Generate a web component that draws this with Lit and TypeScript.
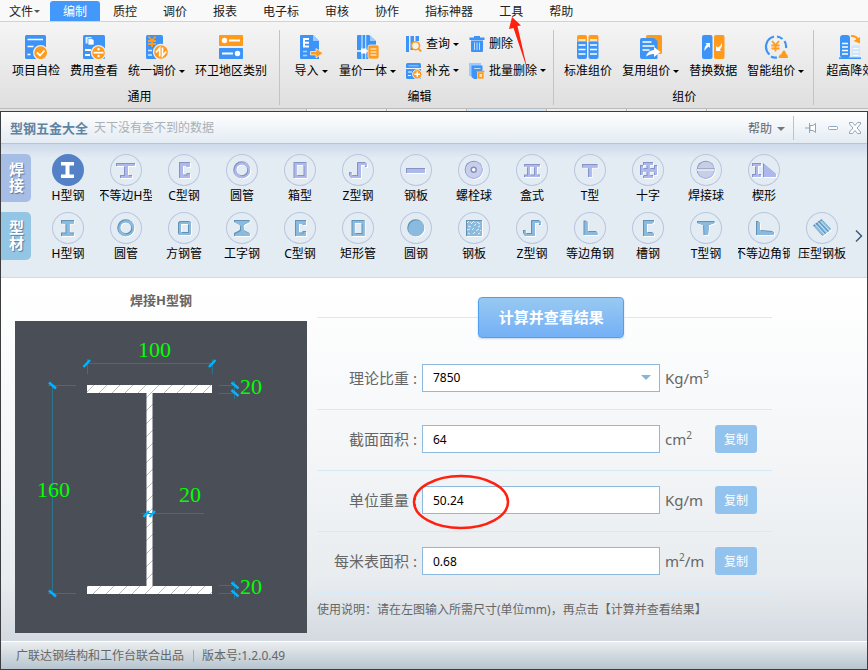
import { LitElement, html, svg, css, nothing } from "lit";
import { customElement, property } from "lit/decorators.js";
import { classMap } from "lit/directives/class-map.js";

const BLUE = "#3d94f6";
const ORANGE = "#ff9a1a";

const yen = (x: number, y: number) => svg`
  <path d="M${x + 0.5} ${y}l3.500 4 3.500-4M${x + 4} ${y + 4}v6.500M${x} ${y + 4.5}h8M${x} ${y + 7.5}h8" stroke=${ORANGE} stroke-width="1.800" fill="none"/>`;

/* Toolbar pictures, drawn on a 24 or a 16 unit grid */
const toolIcons: Record<string, unknown> = {
  check: svg`
    <rect x="1" width="21" height="24" rx="1.500" fill=${BLUE}/>
    <path d="M3.500 4.500h15.500M3.500 11.500h6M3.500 19.500h3" stroke="#fff" stroke-width="1.600"/>
    <circle cx="16.700" cy="17.700" r="7" fill=${ORANGE} stroke="#eee" stroke-width="1.300"/>
    <path d="M13 17.500l3 3 4.500-5" stroke="#fff" stroke-width="1.800" fill="none"/>`,
  fee: svg`
    <rect x="1" width="22" height="24" rx="1.500" fill=${BLUE}/>
    <path d="M3.500 2h6v6.500h-6z" fill="#d9ebff"/><path d="M6 3.500h4l2 2V10H6z" fill="#fff" stroke=${BLUE} stroke-width=".7"/>
    <path d="M3 15h6M3 20h5" stroke="#fff" stroke-width="1.800"/>
    <circle cx="16.500" cy="17.700" r="7" fill=${ORANGE} stroke="#eee" stroke-width="1.300"/>
    <path d="M11.500 17.700h10" stroke="#fff" stroke-width="1.700"/><circle cx="16.500" cy="14.300" r="1.200" fill="#fff"/><circle cx="16.500" cy="21" r="1.200" fill="#fff"/>`,
  adjust: svg`
    <rect x="1" width="17" height="24" rx="1.500" fill=${BLUE}/>
    ${yen(3, 1.5)}
    <path d="M3 15.500h4M3 20h4" stroke="#cfe5ff" stroke-width="1.400"/>
    <circle cx="16" cy="17" r="7.500" fill=${ORANGE} stroke="#eee" stroke-width="1.300"/>
    <path d="M14.700 21.500V13l-3.700 4.500M17.500 12.500V21l3.700-4.500" stroke="#fff" stroke-width="1.700" fill="none"/>`,
  region: svg`
    <rect width="24" height="11" rx=".8" fill=${ORANGE}/><rect y="13" width="24" height="11" rx=".8" fill=${BLUE}/>
    <circle cx="5.500" cy="5.500" r="2.700" fill="#fff"/><circle cx="18.500" cy="18.500" r="2.700" fill="#fff"/>
    <path d="M10 5.500h11M3 18.500h11" stroke="#fff" stroke-width="1.800"/>`,
  import: svg`
    <path d="M2 0h12l6 6v18H2Q1 24 1 23V1Q1 0 2 0z" fill=${BLUE}/><path d="M14 0l6 6h-6z" fill="#9ccbff"/>
    <path d="M10 4H5v7.500h5M5 7.700h5" stroke="#fff" stroke-width="1.900" fill="none"/>
    <path d="M4 16.500h4M4 20.500h4" stroke="#a9d2ff" stroke-width="1.500"/>
    <path d="M11.500 16.500h5.500V13.500l7 4.700-7 4.700v-3h-5.500z" fill=${ORANGE} stroke="#eee" stroke-width=".8"/>`,
  takeoff: svg`
    <path d="M2 0h11l7 6v18H2Q1 24 1 23V1Q1 0 2 0z" fill=${BLUE}/><path d="M14 0l6 6h-6z" fill="#9ccbff"/>
    <path d="M6 0v24M9.700 0v24" stroke="#d5e8ff" stroke-width="1.100"/><path d="M1 16h12" stroke="#fff" stroke-width="1.500"/><rect x="5" y="13.500" width="5.500" height="5" fill="#fff"/>
    <rect x="12" y="10" width="11" height="14" rx="2" fill=${ORANGE} stroke="#eee" stroke-width=".8"/>
    <path d="M14.500 14h6M14.500 17h6M14.500 20h6" stroke="#fff" stroke-width="1.100"/>`,
  query: svg`
    <rect width="3" height="16" fill=${BLUE}/><path d="M4.500 0H8v5l-2 4 2 5H4.500z" fill=${BLUE}/><rect x="9.500" width="3.500" height="5" fill=${BLUE}/>
    <circle cx="9.500" cy="9.700" r="4" fill="#f2f2f2" stroke=${ORANGE} stroke-width="1.600"/><path d="M12.200 12.500l3 3" stroke=${ORANGE} stroke-width="2"/>`,
  fill: svg`
    <rect width="15" height="16" rx="1.500" fill=${BLUE}/><path d="M0 5.500h15" stroke="#e6f2ff" stroke-width="1.100"/><path d="M2.500 2.800h10" stroke="#9ccbff"/>
    <path d="M2 9h4M2 12.500h3" stroke="#fff" stroke-width="1.100"/>
    <circle cx="11.300" cy="11.300" r="4.700" fill=${ORANGE} stroke="#eee"/><path d="M11.300 8.500V14M8.500 11.300H14" stroke="#fff" stroke-width="1.400"/>`,
  trash: svg`
    <path d="M5 0h6v1.500h4.500v2.500h-15V1.500H5z" fill=${BLUE}/><path d="M2 4.500h12V15q0 1-1 1H3q-1 0-1-1z" fill=${BLUE}/>
    <path d="M5.500 6.500v7.500M8 6.500v7.500M10.500 6.500v7.500" stroke="#cfe3ff" stroke-width=".9"/>`,
  batch: svg`
    <path d="M0 0h12v3H3v10H0z" fill="#9ccbff"/><path d="M2.500 2.500h11V16H5l-2.500-2z" fill=${BLUE}/><path d="M5 5.500h6.500" stroke="#bcdcff"/>
    <path d="M8.500 9h6.500v7H8.500z" fill=${ORANGE} stroke="#eee" stroke-width=".6"/><path d="M10.500 11h2.500v3h-2.500z" fill="#ffe2b8"/><path d="M7.500 8.500h8" stroke=${ORANGE} stroke-width="1.400"/>`,
  standard: svg`
    <path d="M1 7V2q0-2 2-2h6q2 0 2 2v5zM12.500 7V2q0-2 2-2h6q2 0 2 2v5z" fill=${ORANGE}/>
    <path d="M1 7h10v15q0 2-2 2H3q-2 0-2-2zM12.500 7h10v15q0 2-2 2h-6q-2 0-2-2z" fill=${BLUE}/>
    <path d="M2.500 5h7M14 5h7M2.500 10h7M14 10h7M2.500 14.500h7M14 14.500h7M2.500 19h7M14 19h7" stroke="#fff" stroke-width="1.300"/>`,
  reuse: svg`
    <rect x="7" width="16" height="19" rx="1.500" fill=${ORANGE}/>
    <path d="M3 3h12l3.500 3v17q0 1-1 1H3q-2 0-2-2V5q0-2 2-2z" fill=${BLUE}/>
    <path d="M3.500 7h9M3.500 11h12M3.500 15h7" stroke="#fff" stroke-width="1.400"/>
    <path d="M7 21.500q2-6.500 8-6.500v-3l6.500 5-6.500 5v-3q-4-.5-8 2.500z" fill="#fff"/>`,
  replace: svg`
    <rect x="1" width="10.500" height="24" rx="2" fill=${BLUE}/><rect x="13" width="10.500" height="24" rx="2" fill=${ORANGE}/>
    <path d="M3.500 16q-.5-4 2.300-6.500L4.500 8H9v5L7.700 11.500Q5 13 3.500 16zM21 8q.5 4-2.300 6.500L20 16h-5v-5l1.600 1.500Q20 11 21 8z" fill="#fff"/>`,
  smart: svg`
    <path d="M5.500 19.500A10.500 10.500 0 0 1 10 1.500M13 1.500A10.500 10.500 0 0 1 18.500 4M20.500 6A10.500 10.500 0 0 1 22 13M7 21.500a10 10 0 0 0 6 1" stroke=${BLUE} stroke-width="2.200" fill="none"/>
    ${yen(7.5, 6)}
    <path d="M14.500 23q.5-3.500 3-4 1-3.500 2.500-3.500t2 3q2 1 2 4.500z" fill=${ORANGE}/>`,
  height: svg`
    <rect x="2" y="0" width="10" height="23" rx="3" fill=${BLUE}/><path d="M4 8.500h6M4 12h6M4 15.500h6M4 19h6" stroke="#fff" stroke-width="1.400"/>
    <rect x="13.500" y="10.500" width="8.500" height="12" rx="1" fill="#cfe6ff"/><path d="M15 13.500h5.500M15 17h5.500M15 20.500h5.500" stroke="#fff" stroke-width="1.200"/>
    <path d="M1 23.200h22" stroke=${BLUE} stroke-width="1.600"/>
    <path d="M13 1q5-.5 7 4" stroke=${ORANGE} stroke-width="2" fill="none"/><path d="M22 2v6.500L15.500 6z" fill=${ORANGE}/>`,
};

/* Cross-sections of the steel profiles, on a 32 unit grid */
const shapes: Record<string, unknown> = {
  h: svg`<path d="M9 8h13v3.500h-4.500v9H22V24H9v-3.500h4.500v-9H9z"/>`,
  hWide: svg`<path d="M6 9h19v3h-7v9h4v3H10v-3h4v-9H6z"/>`,
  c: svg`<path d="M11 8h11v5h-3.500v-1.500H15v9h3.500V19H22v5H11z"/>`,
  ring: svg`<circle cx="15.700" cy="15.700" r="7" class="line"/>`,
  box: svg`<rect x="11" y="9.500" width="10" height="13" class="line"/>`,
  z: svg`<path d="M16 8h7l2 2v3h-2v-2h-4v12q0 1-1 1h-9l-2-3v-3h2.500v3H15V9q0-1 1-1z"/>`,
  plate: svg`<path d="M6 14h19v5H6z"/>`,
  bolt: svg`<circle cx="15.700" cy="15.700" r="9"/>`,
  twin: svg`<path d="M8 10h16v2.500h-3v8h3V23H8v-2.500h3v-8H8zM14 12.500v8h4v-8z" fill-rule="evenodd"/>`,
  t: svg`<path d="M8 10h15.500v3.500h-6V23h-3.500v-9.500H8z"/>`,
  cross: svg`<path d="M11 8h10v3h-3.500v3H22v-3h3v10h-3v-3.500h-4.500V21H21v3H11v-3h3.500v-3.500H11V21H8V11h3v3h3.500v-3H11z"/>`,
  ball: svg`<circle cx="15.700" cy="15.700" r="9"/>`,
  wedge: svg`<path d="M4 9h9v3h-3v8h3v3H4v-3h3v-8H4zM15 9l13 11v3H15z"/>`,
  square: svg`<rect x="11.500" y="10.500" width="10" height="11" rx="1" class="line"/>`,
  taper: svg`<path d="M8 8h15.500v2l-5 2.500-1 1v4l1 1 5 2.500v3H8v-3l5-2.500 1-1v-4l-1-1L8 10z"/>`,
  disc: svg`<circle cx="15.700" cy="15.700" r="8.500"/>`,
  checker: svg`<path d="M8 8h16v16H8z"/>`,
  angle: svg`<path d="M9.500 8.500h2l2 1.500v9h8.500l1.500 2v2H9.500z"/>`,
  channel: svg`<path d="M11 8h11v2l-2 1.500h-5v8.500h5l2 2v2H11z"/>`,
  tTaper: svg`<path d="M7 9h17.500v2L19 13l-1 10h-4.500L13 13l-6-2z"/>`,
  angleWide: svg`<path d="M8 9h2l2 2v7l12 1 2 1.500V23H8z"/>`,
  deck: svg`<path d="M7 13.500L15.500 7 25 17l-8.500 7z"/>`,
};

/* Details laid over a bevelled shape */
const overlays: Record<string, unknown> = {
  bolt: svg`<circle cx="15.700" cy="15.700" r="8" fill="#c8cfee"/><circle cx="15.700" cy="15.700" r="2.500" fill="#fff" stroke="#8292b8" stroke-width="1.500"/>`,
  ball: svg`<circle cx="15.700" cy="15.700" r="8" fill="#c6cfe6"/><path d="M7 15.500h17.500" stroke="#8fa0c0" stroke-width="2.500"/><path d="M7 16h17.500" stroke="#fff" stroke-width="1.400"/>`,
  checker: svg`<path d="M9 11l2-2M13 12l3-3M19 10l3 2M10 14l3 1M16 14l2-2M20 15l2-1M9 18l3-1M14 18l2-2M18 19l3-2M10 21l2 1M15 22l2-2M20 22l2-1M12 10l1 1M17 11v-1M22 18l1 1" stroke="#e6f2fa" stroke-width="1" fill="none"/>`,
  deck: svg`<path d="M9 12l9.500 10.500M11.500 10l9.500 10.500M14 8.500l9.500 10" stroke="#dcecf8" stroke-width=".8"/><path d="M10.500 11.500l9 10M13 9.500l9.500 10" stroke="#5288b2" stroke-width=".9"/>`,
};

@customElement("tool-button")
class ToolButton extends LitElement {
  @property() icon = "";
  @property() label = "";
  @property({ type: Boolean }) menu = false;
  @property({ type: Boolean, reflect: true }) small = false;

  static styles = css`
    :host { display: block; flex: none; }
    button {
      display: flex; flex-direction: column; align-items: center; gap: 4px;
      min-width: 36px; padding: 0; border: 0; background: none; color: #000;
      font: inherit; line-height: 16px; white-space: nowrap;
    }
    .small { flex-direction: row; gap: 4px; }
    .text { display: flex; align-items: center; gap: 3px; }
    .caret { border: solid transparent; border-width: 3px 3px 0; border-top-color: #000; }
    svg { display: block; flex: none; }
  `;

  render() {
    const size = this.small ? 16 : 24;
    return html`<button class=${classMap({ small: this.small })} type="button">
      <svg width=${size} height=${size} viewBox="0 0 ${size} ${size}" aria-hidden="true">${toolIcons[this.icon]}</svg>
      <span class="text">${this.label}${this.menu ? html`<span class="caret"></span>` : nothing}</span>
    </button>`;
  }
}

@customElement("profile-button")
class ProfileButton extends LitElement {
  @property() shape = "";
  @property() label = "";
  @property() tone = "weld";
  @property({ type: Boolean }) active = false;

  static styles = css`
    :host { display: block; flex: 0 0 58px; }
    button {
      display: flex; flex-direction: column; align-items: center; gap: 2px;
      width: 100%; padding: 0; border: 0; background: none; color: #000; font: inherit;
    }
    .disc { box-sizing: border-box; width: 32px; height: 32px; border-radius: 50%; box-shadow: inset 0 0 0 1px #b9c6df; }
    .active .disc { background: #5481c6; box-shadow: none; }
    svg { display: block; }
    .label { display: flex; justify-content: center; width: 52px; overflow: hidden; line-height: 16px; white-space: nowrap; }
    .weld { fill: #8793c4; stroke: #8793c4; }
    .rolled { fill: #6192b6; stroke: #6192b6; }
    .white { fill: #fff; }
    .weld, .rolled { stroke-width: 0; }
    .line { fill: none; stroke-width: 3px; }
  `;

  render() {
    const light = this.tone === "weld" ? "#adb8ec" : "#8abade";
    return html`<button type="button" class=${classMap({ active: this.active })} aria-pressed=${this.active}>
      <span class="disc">
        <svg width="32" height="32" viewBox="0 0 32 32" aria-hidden="true">
          <filter id="bevel" x="-20%" y="-60%" width="150%" height="250%" color-interpolation-filters="sRGB">
            <feOffset in="SourceAlpha" dx="1" dy="1" result="shift" />
            <feFlood flood-color="#fff" />
            <feComposite in2="shift" operator="in" result="rim" />
            <feFlood flood-color=${light} />
            <feComposite in2="shift" operator="in" />
            <feComposite in2="SourceAlpha" operator="in" result="face" />
            <feMerge><feMergeNode in="rim" /><feMergeNode in="SourceGraphic" /><feMergeNode in="face" /></feMerge>
          </filter>
          ${this.active
            ? svg`<g class="white">${shapes[this.shape]}</g>`
            : svg`<g class=${this.tone} filter="url(#bevel)">${shapes[this.shape]}</g>${overlays[this.shape] ?? nothing}`}
        </svg>
      </span>
      <span class="label">${this.label}</span>
    </button>`;
  }
}

@customElement("section-drawing")
class SectionDrawing extends LitElement {
  static styles = css`
    :host { display: block; background: #4a4e57; }
    svg { display: block; width: 100%; }
    .dim { stroke: #2b7590; fill: none; }
    .tick { stroke: #00b4ff; stroke-width: 2.5px; fill: none; }
    text { fill: #00ff00; font: 22px "Liberation Serif", serif; }
  `;

  render() {
    return html`<svg viewBox="0 0 292 312" role="img" aria-label="焊接H型钢">
      <pattern id="hatch" width="13" height="13" patternUnits="userSpaceOnUse">
        <rect width="13" height="13" fill="#fff" /><path d="M-1 14L14 -1" stroke="#bbb" />
      </pattern>
      <path fill="url(#hatch)" d="M72 64h125v8h-59.500v193H197v8H72v-8h59.500V72H72z" />
      <path class="dim" d="M72.500 38v15M197.500 38v15M72 42.500h125M37.500 64v209M33 64.500h28M33 272.500h28M204 64.500h18M204 72.500h18M219.500 60v18M204 264.500h18M204 272.500h18M219.500 260v18M126 192.500h63" />
      <path class="tick" d="M68.500 46l6.500-7M194 46l6.500-7M34 61.500l7 6M34 269.500l7 6M216.500 61.500l7 6M216.500 69l7 6M216.500 261.500l7 6M216.500 269.500l7 6M128.500 196l5.500-6M134.500 196l5.500-6" />
      <text x="123" y="36">100</text>
      <text x="22" y="176">160</text>
      <text x="164" y="181">20</text>
      <text x="225" y="73">20</text>
      <text x="225" y="273">20</text>
    </svg>`;
  }
}

const tabs = ["编制", "质控", "调价", "报表", "电子标", "审核", "协作", "指标神器", "工具", "帮助"];

const weld = [
  ["h", "H型钢"], ["hWide", "不等边H型"], ["c", "C型钢"], ["ring", "圆管"], ["box", "箱型"], ["z", "Z型钢"], ["plate", "钢板"],
  ["bolt", "螺栓球"], ["twin", "盒式"], ["t", "T型"], ["cross", "十字"], ["ball", "焊接球"], ["wedge", "楔形"],
];
const rolled = [
  ["h", "H型钢"], ["ring", "圆管"], ["square", "方钢管"], ["taper", "工字钢"], ["c", "C型钢"], ["box", "矩形管"], ["disc", "圆钢"],
  ["checker", "钢板"], ["z", "Z型钢"], ["angle", "等边角钢"], ["channel", "槽钢"], ["tTaper", "T型钢"], ["angleWide", "不等边角钢"], ["deck", "压型钢板"],
];

const results = [
  { id: "area", label: "截面面积", value: "64", unit: html`cm<sup>2</sup>`, marked: false },
  { id: "weight", label: "单位重量", value: "50.24", unit: html`Kg/m`, marked: true },
  { id: "surface", label: "每米表面积", value: "0.68", unit: html`m<sup>2</sup>/m`, marked: false },
];

@customElement("app-root")
class AppRoot extends LitElement {
  static styles = css`
    :host {
      display: flex; flex-direction: column; min-height: 100vh; overflow: hidden;
      font: 12px/16px "Noto Sans", "Noto Sans CJK SC", sans-serif; color: #000; background: #e0e0e0;
    }
    button, input, select { font: inherit; margin: 0; }
    svg { display: block; }

    .menu { display: flex; height: 21px; background: #f9f9f9; border-bottom: 1px solid #d2d2d2; }
    .tab { position: relative; flex: none; padding: 2px 13px 0; border: 0; background: none; color: #222; white-space: nowrap; }
    .file { display: flex; align-items: center; gap: 1px; width: 50px; padding: 2px 0 0 9px; }
    .file::after { content: ""; border: solid transparent; border-width: 3px 3px 0; border-top-color: #555; }
    .current { margin-top: 1px; border-radius: 3px 3px 0 0; background: #4398fb; color: #fff; }
    .pointer { position: absolute; left: 20px; top: 16px; z-index: 2; pointer-events: none; }

    .ribbon { display: flex; padding: 8px 0 3px; background: linear-gradient(#f5f5f5, #dfdfdf); border-bottom: 1px solid #bcbcbc; overflow: hidden; }
    .group { display: flex; flex-direction: column; justify-content: space-between; flex: none; height: 75px; padding: 0 12px; border-right: 1px solid #c4c4c4; }
    .edit { padding: 0 7px 0 13px; }
    .price { padding: 0 9px 0 10px; }
    .tools { display: flex; gap: 10px; padding-top: 5px; }
    .stack { display: grid; gap: 10px; padding-top: 1px; }
    .name { text-align: center; }
    .edge { display: flex; height: 2px; flex: none; background: #eee; }
    .edge span { width: 79px; border-right: 1px solid #bbb; }
    .edge .lead { width: 306px; background: #e2e2e2; }
    .edge .blue { background: #cfe6fa; }

    .dialog { flex: 1; display: flex; flex-direction: column; border: 1px solid #3c3d40; background: linear-gradient(#fff 180px, #f3f5f7 350px, #e8ecef 470px, #d3d9e0 530px); }
    .title { display: flex; align-items: center; height: 31px; padding: 0 4px 0 9px; background: linear-gradient(#fff, #e3ebf3); border-bottom: 1px solid #b6c4d9; color: #aab0b4; }
    h1 { margin: 0 6px 0 0; font-size: 13px; color: #5d84a2; }
    .help { display: flex; align-items: center; gap: 5px; margin-left: auto; padding: 2px 8px 0 0; border: 0; background: none; color: #666; }
    .help::after { content: ""; border: solid transparent; border-width: 4px 4px 0; border-top-color: #777; }
    .controls { display: flex; gap: 6px; padding-left: 9px; border-left: 1px solid #b6c4d9; height: 24px; align-items: center; }
    .controls button { padding: 0; border: 0; background: none; }

    .catalog { display: grid; gap: 10px; padding: 10px 0 17px; background: linear-gradient(#cddaeb, #e3ebf3 14px); border-bottom: 1px solid #d3dae2; overflow: hidden; }
    .shelf { display: flex; height: 48px; }
    .kind { flex: none; width: 30px; margin-right: 8px; padding: 0 7px 2px 8px; border: 0; border-radius: 0 5px 5px 0; color: #fff; font-size: 15px; font-weight: 700; line-height: 16px; text-shadow: 1px 1px 1px #57769e; }
    .weld { background: #a6bde5; }
    .rolled { background: #93c6e4; }
    .more { padding: 0 0 0 4px; border: 0; background: none; }

    .body { flex: 1; display: grid; grid-template-columns: 292px 1fr; gap: 10px; padding: 0 95px 7px 14px; }
    h2 { margin: 12px 0 11px; font-size: 13px; line-height: 20px; text-align: center; color: #666; }
    .form { padding-top: 19px; color: #666; }
    .action { display: flex; align-items: center; margin-bottom: 11px; }
    .rule { height: 1px; background: #d6eafa; flex: 12; }
    .rule.end { flex: 11; }
    .run { height: 41px; width: 146px; padding: 0 0 2px; border: 1px solid #519ff2; border-radius: 4px; background: linear-gradient(#97c9f1, #74b0f6); box-shadow: 0 1px 2px #c5d5e5; color: #fff; font-size: 15px; font-weight: 700; }
    .row { position: relative; display: grid; grid-template-columns: 100px 1fr 45px 42px; column-gap: 5px; align-items: center; padding: 15px 15px 17px 0; border-bottom: 1px solid #d6eafa; }
    .row label, .unit { font-size: 15px; white-space: nowrap; }
    .row label { text-align: right; }
    sup { font-size: 10px; line-height: 0; vertical-align: 6px; }
    .field { box-sizing: border-box; width: 100%; height: 28px; padding: 0 10px; border: 1px solid #8cb9dd; border-radius: 0; background: #fff; color: #000; outline: 0; appearance: none; }
    .picker { position: relative; }
    .picker::after { content: ""; position: absolute; right: 9px; top: 11px; border: solid transparent; border-width: 5px 5px 0; border-top-color: #84b5db; pointer-events: none; }
    .copy { height: 28px; padding: 2px 0 0; border: 0; border-radius: 3px; background: #92c3ee; color: #fff; }
    .ring { position: absolute; left: 95px; top: 3px; pointer-events: none; }
    .note { margin: 8px 0 0; line-height: 18px; white-space: nowrap; }

    footer { display: flex; align-items: center; height: 27px; padding: 0 15px; border-top: 1px solid #fff; background: linear-gradient(#eaedee, #b7c5cf); color: #666; }
    .version { margin-left: 9px; padding-left: 8px; border-left: 1px solid #a3adb5; line-height: 12px; }
  `;

  private shelf(tone: string, name: string, items: string[][]) {
    return html`<div class="shelf">
      <button class="kind ${tone}" type="button">${name}</button>
      ${items.map(([shape, label], i) => html`<profile-button .shape=${shape} .label=${label} .tone=${tone}
        .active=${tone === "weld" && i === 0}></profile-button>`)}
      ${tone === "rolled"
        ? html`<button class="more" type="button" aria-label="更多"><svg width="8" height="14" viewBox="0 0 8 14"><path d="M1 1.500l5.500 5.500L1 12.500" fill="none" stroke="#3d5c7c" stroke-width="1.500"/></svg></button>`
        : nothing}
    </div>`;
  }

  render() {
    return html`
      <nav class="menu">
        <button class="tab file" type="button">文件</button>
        ${tabs.map((t) => html`<button type="button" class=${classMap({ tab: true, current: t === "编制" })}>${t}${t === "工具"
          ? html`<svg class="pointer" width="26" height="58" viewBox="0 0 26 58" aria-hidden="true"><path d="M6 1L15 9.500 11.500 10 21.500 54 7.500 12 3 13z" fill="#ff2010"/></svg>`
          : nothing}</button>`)}
      </nav>
      <div class="ribbon">
        <section class="group">
          <div class="tools">
            <tool-button icon="check" label="项目自检"></tool-button>
            <tool-button icon="fee" label="费用查看"></tool-button>
            <tool-button icon="adjust" label="统一调价" menu></tool-button>
            <tool-button icon="region" label="环卫地区类别"></tool-button>
          </div>
          <div class="name">通用</div>
        </section>
        <section class="group edit">
          <div class="tools">
            <tool-button icon="import" label="导入" menu></tool-button>
            <tool-button icon="takeoff" label="量价一体" menu></tool-button>
            <div class="stack">
              <tool-button icon="query" label="查询" menu small></tool-button>
              <tool-button icon="fill" label="补充" menu small></tool-button>
            </div>
            <div class="stack">
              <tool-button icon="trash" label="删除" small></tool-button>
              <tool-button icon="batch" label="批量删除" menu small></tool-button>
            </div>
          </div>
          <div class="name">编辑</div>
        </section>
        <section class="group price">
          <div class="tools">
            <tool-button icon="standard" label="标准组价"></tool-button>
            <tool-button icon="reuse" label="复用组价" menu></tool-button>
            <tool-button icon="replace" label="替换数据"></tool-button>
            <tool-button icon="smart" label="智能组价" menu></tool-button>
          </div>
          <div class="name">组价</div>
        </section>
        <section class="group">
          <div class="tools"><tool-button icon="height" label="超高降效"></tool-button></div>
        </section>
      </div>
      <div class="edge"><span class="lead"></span><span></span><span></span><span class="blue"></span><span></span><span></span></div>

      <main class="dialog">
        <header class="title">
          <h1>型钢五金大全</h1>
          <span>天下没有查不到的数据</span>
          <button class="help" type="button">帮助</button>
          <div class="controls">
            <button type="button" aria-label="固定"><svg width="16" height="14" viewBox="0 0 16 14"><path d="M2 7h4.500M6.500 2v10M7 4.500h3l2.500-2v9l-2.500-2H7z" fill="#fff" stroke="#8fa5bb"/></svg></button>
            <button type="button" aria-label="最小化"><svg width="16" height="14" viewBox="0 0 16 14"><rect x="3.500" y="5.500" width="9" height="3" rx="1" fill="#fff" stroke="#8fa5bb"/></svg></button>
            <button type="button" aria-label="关闭"><svg width="16" height="14" viewBox="0 0 16 14"><path d="M2.500 1.500h3L8 4.500l2.500-3h3v1.500L10 7l3.500 4v1.500h-3L8 9.500l-2.500 3h-3V11L6 7 2.500 3z" fill="#fff" stroke="#8fa5bb"/></svg></button>
          </div>
        </header>
        <div class="catalog">
          ${this.shelf("weld", "焊接", weld)}
          ${this.shelf("rolled", "型材", rolled)}
        </div>
        <div class="body">
          <section>
            <h2>焊接H型钢</h2>
            <section-drawing></section-drawing>
          </section>
          <form class="form" @submit=${(e: Event) => e.preventDefault()}>
            <div class="action"><span class="rule"></span><button class="run">计算并查看结果</button><span class="rule end"></span></div>
            <div class="row">
              <label for="density">理论比重 :</label>
              <div class="picker"><select class="field" id="density"><option>7850</option></select></div>
              <span class="unit">Kg/m<sup>3</sup></span>
            </div>
            ${results.map((r) => html`<div class="row">
              <label for=${r.id}>${r.label} :</label>
              <input class="field" id=${r.id} .value=${r.value} />
              <span class="unit">${r.unit}</span>
              <button class="copy" type="button">复制</button>
              ${r.marked ? html`<svg class="ring" width="98" height="56" viewBox="0 0 98 56" aria-hidden="true"><ellipse cx="49" cy="28" rx="47" ry="26" fill="none" stroke="#ff2010" stroke-width="2.500"/></svg>` : nothing}
            </div>`)}
            <p class="note">使用说明：请在左图输入所需尺寸(单位mm)，再点击【计算并查看结果】</p>
          </form>
        </div>
        <footer><span>广联达钢结构和工作台联合出品</span><span class="version">版本号:1.2.0.49</span></footer>
      </main>
    `;
  }
}
